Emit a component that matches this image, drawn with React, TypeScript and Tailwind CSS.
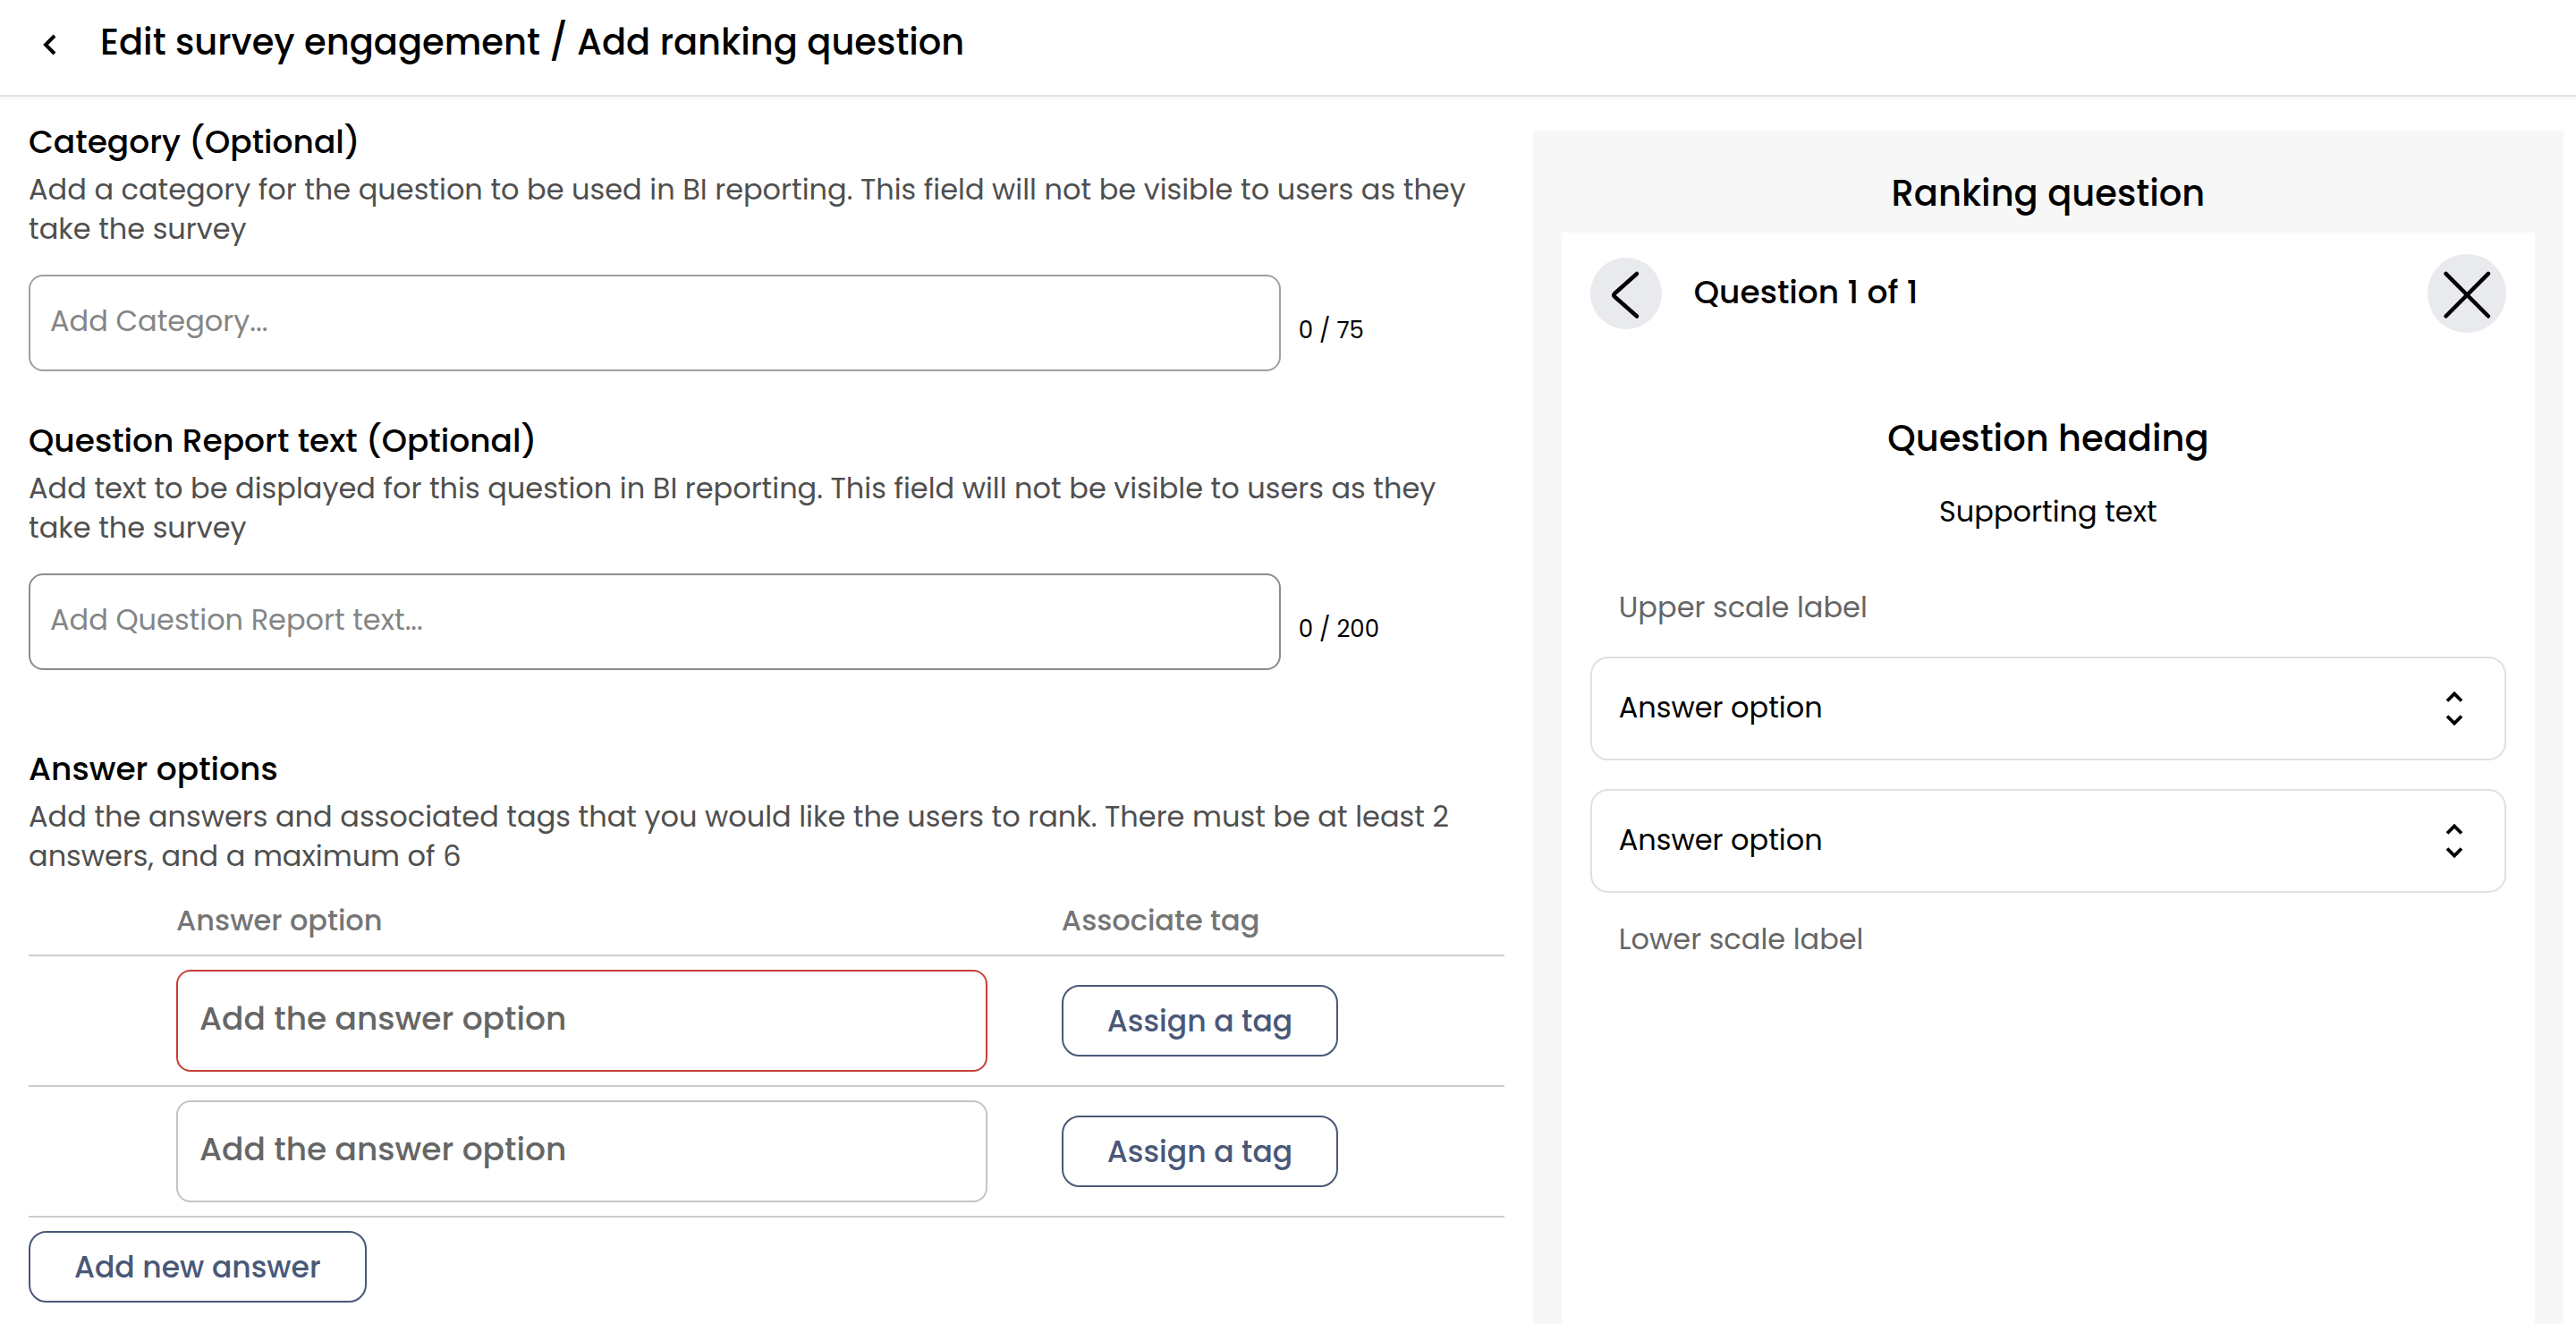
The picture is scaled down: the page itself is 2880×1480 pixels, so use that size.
import React, { useState } from "react";

function ChevronLeftIcon() {
  return (
    <svg viewBox="0 0 32 60" className="h-[60px] w-8" fill="none" stroke="currentColor" strokeWidth="4" aria-hidden="true">
      <path d="M21 23 L11 33 L21 43" />
    </svg>
  );
}

function PreviewBackIcon() {
  return (
    <svg viewBox="0 0 80 80" className="size-20" fill="none" stroke="currentColor" strokeWidth="4.5" strokeLinecap="round" strokeLinejoin="round" aria-hidden="true">
      <path d="M52 18 L27 40.2 Q25.4 41.9 27 43.5 L52 65.5" />
    </svg>
  );
}

function PreviewCloseIcon() {
  return (
    <svg viewBox="0 0 88 88" className="size-[88px]" fill="none" stroke="currentColor" strokeWidth="4.5" strokeLinecap="round" aria-hidden="true">
      <path d="M20.5 21.8 L68 69.5 M68 21.8 L20.5 69.5" />
    </svg>
  );
}

function ReorderIcon() {
  return (
    <svg viewBox="0 0 24 48" className="h-12 w-6" fill="none" stroke="currentColor" strokeWidth="3.8" aria-hidden="true">
      <path d="M4 15.5 L12 7.5 L20 15.5 M4 32.5 L12 40.5 L20 32.5" />
    </svg>
  );
}

type TextFieldProps = {
  id: string;
  title: string;
  description: string;
  placeholder: string;
  limit: number;
  borderClass: string;
};

function TextField({ id, title, description, placeholder, limit, borderClass }: TextFieldProps) {
  const [value, setValue] = useState("");
  return (
    <section className="mb-14">
      <label htmlFor={id} className="block text-[36px] font-medium leading-[44px]">
        {title}
      </label>
      <p className="mt-[9px] text-[32px] leading-[44px] text-[#4f4f4f]">{description}</p>
      <div className="mt-[29px] flex items-center gap-5">
        <input
          id={id}
          type="text"
          value={value}
          maxLength={limit}
          onChange={(e) => setValue(e.target.value)}
          placeholder={placeholder}
          className={`h-[108px] w-[84.85%] rounded-2xl border-2 px-[22px] pb-1 text-[32px] placeholder:text-[#858585] ${borderClass}`}
        />
        <span className="whitespace-nowrap pt-4 text-[26px] leading-9">
          {value.length} / {limit}
        </span>
      </div>
    </section>
  );
}

function OutlineButton({ children }: { children: React.ReactNode }) {
  return (
    <button type="button" className="h-20 whitespace-nowrap rounded-[20px] border-2 border-[#4a5878] px-[49px] pt-0.5 text-[33px] font-medium text-[#4a5878]">
      {children}
    </button>
  );
}

const answerRows = [
  { id: "answer-1", borderClass: "border-[#c63f36]" },
  { id: "answer-2", borderClass: "border-[#c4c4c4]" },
];

function AnswerTable() {
  return (
    <table className="w-full table-fixed border-collapse text-left">
      <thead>
        <tr className="border-b-2 border-[#cecece] text-[32px] leading-[44px] text-[#757575]">
          <td className="w-[10%]" />
          <th scope="col" className="w-[60%] pt-7 pb-4 font-medium">Answer option</th>
          <th scope="col" className="w-[30%] pt-7 pb-4 font-medium">Associate tag</th>
        </tr>
      </thead>
      <tbody>
        {answerRows.map((row) => (
          <tr key={row.id} className="border-b-2 border-[#cecece]">
            <td />
            <td className="py-[15px]">
              <input
                id={row.id}
                type="text"
                aria-label="Answer option"
                placeholder="Add the answer option"
                className={`block h-[114px] w-11/12 rounded-2xl border-2 px-6 pb-1.5 text-[36px] font-medium placeholder:text-[#666666] ${row.borderClass}`}
              />
            </td>
            <td className="py-[15px]">
              <OutlineButton>Assign a tag</OutlineButton>
            </td>
          </tr>
        ))}
      </tbody>
    </table>
  );
}

function Preview() {
  return (
    <aside className="flex flex-col bg-[#f7f7f7] px-8 pt-10">
      <h2 className="text-center text-[40px] font-medium leading-[60px]">Ranking question</h2>
      <div className="mt-3.5 flex-1 bg-white px-8 pt-6">
        <div className="flex items-center">
          <button type="button" aria-label="Previous question" className="rounded-full bg-[#e8eaed]">
            <PreviewBackIcon />
          </button>
          <p className="ml-9 pb-0.5 text-[36px] font-medium leading-[44px]">Question 1 of 1</p>
          <button type="button" aria-label="Close preview" className="ml-auto rounded-full bg-[#e8eaed]">
            <PreviewCloseIcon />
          </button>
        </div>
        <h3 className="mt-[88px] text-center text-[40px] font-medium leading-[60px]">Question heading</h3>
        <p className="mt-7 text-center text-[32px] leading-[48px]">Supporting text</p>
        <p className="mt-[59px] pl-8 text-[32px] leading-[48px] text-[#666666]">Upper scale label</p>
        <ul className="mt-[31px] mb-7 flex flex-col gap-8">
          {[1, 2].map((n) => (
            <li key={n} className="flex h-[116px] items-center justify-between rounded-[20px] border-2 border-[#e0e0e0] pl-[30px] pr-11 text-[32px]">
              <span className="pb-0.5">Answer option</span>
              <ReorderIcon />
            </li>
          ))}
        </ul>
        <p className="pl-8 text-[32px] leading-[48px] text-[#666666]">Lower scale label</p>
      </div>
    </aside>
  );
}

export default function App() {
  return (
    <div className="flex min-h-screen flex-col bg-white font-['Poppins','Inter',sans-serif] text-black">
      <header className="flex items-center gap-10 border-b-2 border-[#e4e4e4] px-10 pt-[17px] pb-[29px] shadow-[0_2px_4px_rgba(0,0,0,0.05)]">
        <button type="button" aria-label="Back">
          <ChevronLeftIcon />
        </button>
        <h1 className="text-[40px] font-medium leading-[60px]">Edit survey engagement / Add ranking question</h1>
      </header>
      <main className="grid flex-1 grid-cols-[63fr_44fr] gap-8 pr-3.5 pl-8">
        <form className="pt-[29px]">
          <TextField
            id="category"
            title="Category (Optional)"
            description="Add a category for the question to be used in BI reporting. This field will not be visible to users as they take the survey"
            placeholder="Add Category..."
            limit={75}
            borderClass="border-[#a0a0a0]"
          />
          <TextField
            id="report-text"
            title="Question Report text (Optional)"
            description="Add text to be displayed for this question in BI reporting. This field will not be visible to users as they take the survey"
            placeholder="Add Question Report text..."
            limit={200}
            borderClass="border-[#8c8c8c]"
          />
          <section className="pt-[33px]">
            <h2 className="text-[36px] font-medium leading-[44px]">Answer options</h2>
            <p className="mt-[9px] text-[32px] leading-[44px] text-[#4f4f4f]">
              Add the answers and associated tags that you would like the users to rank. There must be at least 2 answers, and a maximum of 6
            </p>
            <AnswerTable />
            <div className="mt-[15px]">
              <OutlineButton>Add new answer</OutlineButton>
            </div>
          </section>
        </form>
        <div className="flex flex-col pt-[38px] *:flex-1">
          <Preview />
        </div>
      </main>
    </div>
  );
}
